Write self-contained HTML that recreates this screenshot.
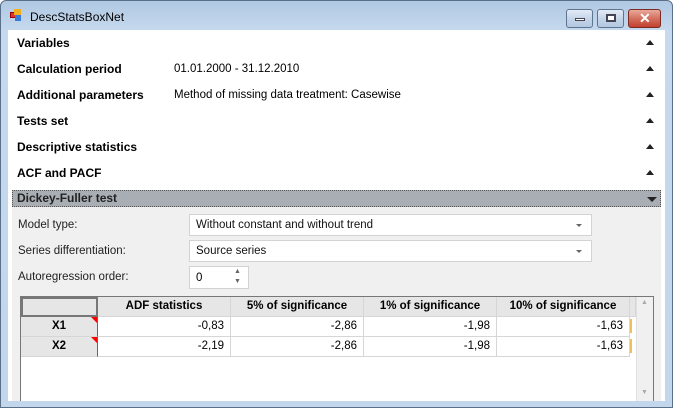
<!DOCTYPE html>
<html><head><style>
*{margin:0;padding:0;box-sizing:border-box}
body{width:673px;height:408px;overflow:hidden;font-family:"Liberation Sans",sans-serif;font-size:12px;background:#fff;position:relative}
.frame{position:absolute;left:0;top:0;width:673px;height:408px;background:linear-gradient(#b0c8e2,#c6d9ee 30px,#c2d6ec);border:1px solid #5a6f88;border-radius:6px 6px 0 0}
.client{position:absolute;left:8px;top:30px;width:657px;height:371px;background:#fff;overflow:hidden}
.abs{position:absolute}
.sec{position:absolute;left:9px;font-weight:bold;font-size:12px;color:#000}
.val{position:absolute;left:166px;font-size:11.5px}
.tri{position:absolute;left:638px;width:0;height:0;border-left:4px solid transparent;border-right:4px solid transparent;border-bottom:5px solid #222}
.btn{position:absolute;top:9px;height:19px;border:1px solid #5e7592;border-radius:3px;background:linear-gradient(#e2ebf6,#c5d5e9 50%,#b3c8e1)}
.lbl{position:absolute;left:10px;font-size:11.5px;color:#222}
.combo{position:absolute;left:181px;width:403px;height:22px;background:#fff;border:1px solid #d3d3d3;font-size:11.5px;padding:4px 6px;color:#111}
.combo:after{content:"";position:absolute;right:9px;top:9px;border-left:3px solid transparent;border-right:3px solid transparent;border-top:3px solid #666}
.grid{position:absolute;left:12px;top:266px;width:634px;height:110px;background:#fff;border:1px solid #777}
.c{position:absolute;height:20px;border-right:1px solid #d6d6d6;border-bottom:1px solid #d6d6d6;font-size:11.5px;line-height:19px}
.h{background:#e6e6e6;font-weight:bold;text-align:center}
.n{text-align:right;padding-right:6px}
.rh{background:#e6e6e6;font-weight:bold;text-align:center;border-right:1px solid #666}
.flag{position:absolute;right:0;top:0;border-left:6px solid transparent;border-top:6px solid #f00}
</style></head><body>
<div class="frame"></div>
<div class="abs" style="left:10px;top:12px;width:6px;height:6px;background:#d33;border:1px solid #900"></div>
<div class="abs" style="left:14px;top:9px;width:7px;height:6px;background:#f0b020"></div>
<div class="abs" style="left:15px;top:15px;width:6px;height:6px;background:#3a7ad8"></div>
<div class="abs" style="left:30px;top:10px;font-size:12px;color:#000">DescStatsBoxNet</div>
<div class="btn" style="left:566px;width:27px"><div class="abs" style="left:8px;top:8px;width:10px;height:3px;background:#fff;border:1px solid #445"></div></div>
<div class="btn" style="left:597px;width:27px"><div class="abs" style="left:8px;top:4px;width:10px;height:8px;border:2px solid #445;background:#fff"></div></div>
<div class="btn" style="left:628px;width:33px;border-color:#7a2b22;background:linear-gradient(#e9a99a,#d4705f 50%,#c2412f)"><div class="abs" style="left:10px;top:0;font-weight:bold;color:#fff;font-size:14px;line-height:17px">✕</div></div>
<div class="client">
<div class="sec" style="top:6px">Variables</div><div class="tri" style="top:10px"></div>
<div class="sec" style="top:32px">Calculation period</div><div class="val" style="top:33px">01.01.2000 - 31.12.2010</div><div class="tri" style="top:36px"></div>
<div class="sec" style="top:58px">Additional parameters</div><div class="val" style="top:59px">Method of missing data treatment: Casewise</div><div class="tri" style="top:62px"></div>
<div class="sec" style="top:84px">Tests set</div><div class="tri" style="top:88px"></div>
<div class="sec" style="top:110px">Descriptive statistics</div><div class="tri" style="top:114px"></div>
<div class="sec" style="top:136px">ACF and PACF</div><div class="tri" style="top:140px"></div>
<div class="abs" style="left:4px;top:160px;width:649px;height:211px;background:#f0f0f0"></div>
<div class="abs" style="left:4px;top:160px;width:649px;height:17px;background:#a9aeb4;border:1px dotted #555;font-weight:bold;font-size:12px;padding-left:4px;line-height:15px;color:#222">Dickey-Fuller test</div>
<div class="abs" style="left:639px;top:167px;border-left:5px solid transparent;border-right:5px solid transparent;border-top:5px solid #222"></div>
<div class="lbl" style="top:189px">Model type:</div>
<div class="combo" style="top:184px">Without constant and without trend</div>
<div class="lbl" style="top:215px">Series differentiation:</div>
<div class="combo" style="top:210px">Source series</div>
<div class="lbl" style="top:241px">Autoregression order:</div>
<div class="abs" style="left:181px;top:236px;width:60px;height:23px;background:#fff;border:1px solid #d3d3d3;padding:5px 6px;font-size:11.5px">0<span class="abs" style="left:44px;top:1px;font-size:7px;color:#666">▲</span><span class="abs" style="left:44px;top:11px;font-size:7px;color:#666">▼</span></div>
<div class="grid">
<div class="c h" style="left:0;top:0;width:77px;border:2px solid #777"></div>
<div class="c h" style="left:77px;top:0;width:133px">ADF statistics</div>
<div class="c h" style="left:210px;top:0;width:133px">5% of significance</div>
<div class="c h" style="left:343px;top:0;width:133px">1% of significance</div>
<div class="c h" style="left:476px;top:0;width:133px">10% of significance</div>
<div class="c h" style="left:609px;top:0;width:6px"></div>
<div class="c rh" style="left:0;top:20px;width:77px">X1<div class="flag"></div></div>
<div class="c n" style="left:77px;top:20px;width:133px">-0,83</div>
<div class="c n" style="left:210px;top:20px;width:133px">-2,86</div>
<div class="c n" style="left:343px;top:20px;width:133px">-1,98</div>
<div class="c n" style="left:476px;top:20px;width:133px">-1,63</div>
<div class="c rh" style="left:0;top:40px;width:77px">X2<div class="flag"></div></div>
<div class="c n" style="left:77px;top:40px;width:133px">-2,19</div>
<div class="c n" style="left:210px;top:40px;width:133px">-2,86</div>
<div class="c n" style="left:343px;top:40px;width:133px">-1,98</div>
<div class="c n" style="left:476px;top:40px;width:133px">-1,63</div>
<div class="abs" style="left:609px;top:22px;width:2px;height:14px;background:#f0c060"></div>
<div class="abs" style="left:609px;top:42px;width:2px;height:14px;background:#f0c060"></div>
<div class="abs" style="left:615px;top:0;width:17px;height:108px;background:#f0f0f0;border-left:1px solid #e0e0e0"><span class="abs" style="left:4px;top:2px;font-size:7px;color:#aaa">▲</span><span class="abs" style="left:4px;top:92px;font-size:7px;color:#aaa">▼</span></div>
</div>
</div>
</body></html>
